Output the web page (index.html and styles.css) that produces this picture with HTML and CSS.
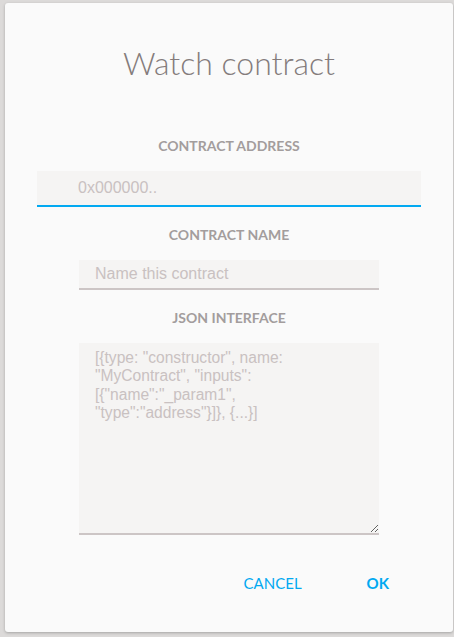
FILE: index.html
```html
<!DOCTYPE html>
<html>
<head>
<meta charset="utf-8">
<link rel="stylesheet" href="styles.css">
</head>
<body>
<div class="backdrop">
  <div class="dialog">
    <h1 class="title">Watch contract</h1>
    <div class="label label-first">CONTRACT ADDRESS</div>
    <input class="field field-address" type="text" placeholder="0x000000..">
    <div class="label">CONTRACT NAME</div>
    <input class="field field-name" type="text" placeholder="Name this contract">
    <div class="label">JSON INTERFACE</div>
    <textarea class="field field-json" placeholder='[{type: "constructor", name: "MyContract", "inputs": [{"name":"_param1", "type":"address"}]}, {...}]'></textarea>
    <div class="actions">
      <button class="btn btn-cancel">CANCEL</button>
      <button class="btn btn-ok">OK</button>
    </div>
  </div>
</div>
</body>
</html>
```
FILE: styles.css
```css
html, body {
  margin: 0;
  padding: 0;
}
body {
  background: #dcdad9;
  width: 454px;
  height: 637px;
  overflow: hidden;
}
.backdrop {
  padding: 3px 1px 0 5px;
}
.dialog {
  box-sizing: border-box;
  width: 448px;
  height: 629px;
  background: #fafafa;
  border-radius: 3px;
  box-shadow: 0 1px 3px rgba(0,0,0,0.25);
  display: flex;
  flex-direction: column;
  align-items: center;
  padding-top: 41px;
}
.title {
  margin: 0;
  font-family: Lato, "Open Sans", sans-serif;
  font-weight: 300;
  font-size: 32px;
  line-height: 38px;
  color: #847c7c;
}
.label {
  font-family: Lato, "Open Sans", sans-serif;
  font-weight: 700;
  font-size: 14px;
  line-height: 20px;
  color: #a39d9d;
  margin-top: 18px;
  margin-bottom: 15px;
}
.label-first {
  margin-top: 54px;
}
.field {
  box-sizing: border-box;
  display: block;
  border: none;
  border-bottom: 2px solid #ccc5c5;
  background: #f5f4f3;
  font-family: "Liberation Sans", Arial, sans-serif;
  font-size: 16px;
  color: #555;
  outline: none;
  margin: 0;
}
.field::placeholder {
  color: #c9c1c1;
  opacity: 1;
}
.field-address {
  width: 384px;
  height: 36px;
  padding: 0 0 0 41px;
  border-bottom-color: #02a9f1;
}
.field-name {
  width: 300px;
  height: 30px;
  padding: 0 0 0 16px;
}
.field-json {
  width: 300px;
  height: 192px;
  padding: 6px 56px 7px 16px;
  font-size: 15.6px;
  line-height: 18.3px;
  resize: both;
}
.actions {
  align-self: stretch;
  display: flex;
  justify-content: flex-end;
  gap: 65px;
  margin-top: 38px;
  padding-right: 64px;
}
.btn {
  border: none;
  background: none;
  padding: 0;
  font-family: Lato, "Open Sans", sans-serif;
  font-size: 15px;
  line-height: 20px;
  color: #02a9f1;
  cursor: pointer;
}
.btn-cancel {
  font-weight: 400;
}
.btn-ok {
  font-weight: 700;
}
```
